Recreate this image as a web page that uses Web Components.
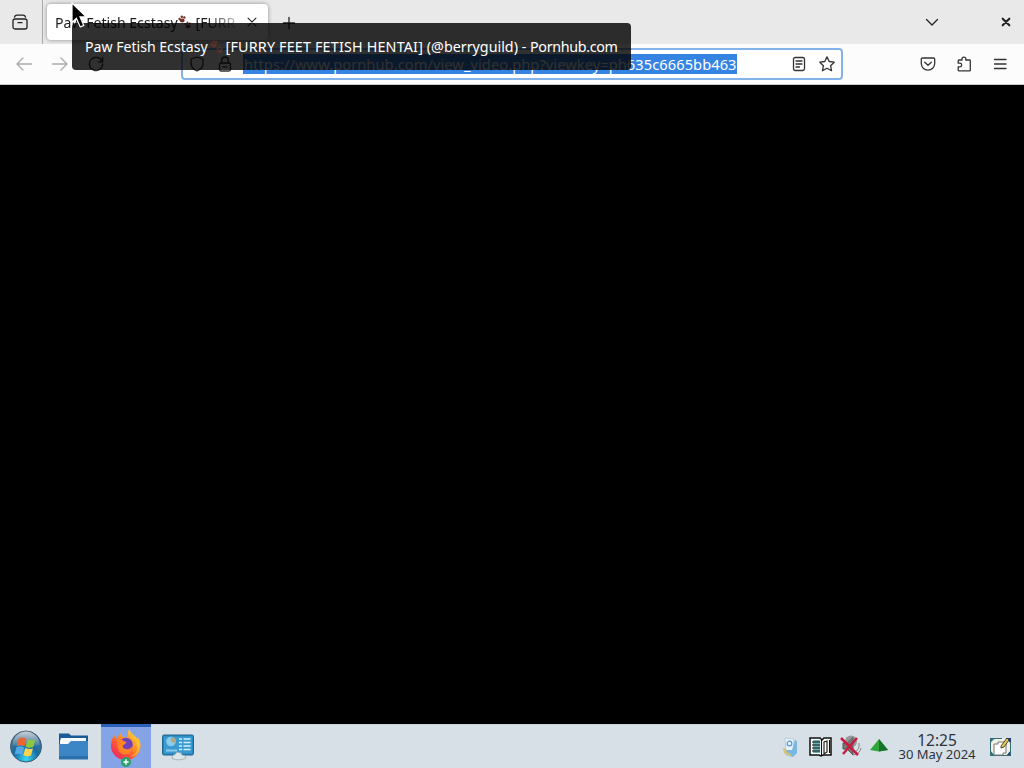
<!DOCTYPE html>
<html lang="en">
<head>
<meta charset="utf-8">
<title>Desktop</title>
<style>
  body {
    margin: 0;
    overflow: hidden;
    font-family: "Noto Sans", sans-serif;
  }
</style>
</head>
<body>
<desk-screen></desk-screen>

<script>
function define(name, html) {
  window.customElements.define(name, class extends HTMLElement {
    constructor() {
      super();
      let shadow = this.attachShadow({mode: 'open'});
      shadow.innerHTML = html;
    }
  });
}

// 16x16 line icons, stroked with the current colour
const glyphs = {
  view: '<rect x="1" y="5" width="14" height="10" rx="2"/><path d="M2.5 3.2Q3 1.2 5 1.2h6q2 0 2.5 2M6 8.7h4"/>',
  back: '<path d="M15.5 8H1.2M7 2 1 8l6 6"/>',
  forward: '<path d="M.5 8h14.3M9 2l6 6-6 6"/>',
  reload: '<path d="M14 5.2A6.6 6.6 0 1 0 14.6 8M14.6 1.5v4.3h-4.3"/>',
  shield: '<path d="M8 1 14 3v4.2c0 3.8-2.5 6.3-6 7.8-3.5-1.5-6-4-6-7.8V3z"/>',
  lock: '<rect x="2.5" y="7" width="11" height="8" rx="1.5"/><path d="M4.7 7V4.3a3.3 3.3 0 0 1 6.6 0V7M6 10.8h4"/>',
  reader: '<rect x="2.5" y="1.5" width="11" height="13" rx="1.8"/><path d="M5 5h6M5 8h6M5 11h3.5"/>',
  star: '<path d="m8 .9 2.2 4.6 5 .7-3.6 3.5.9 5L8 12.3l-4.5 2.4.9-5L.8 6.2l5-.7z"/>',
  pocket: '<path d="M2.5 2h11q1.2 0 1.2 1.2V7.5a6.7 6.7 0 0 1-13.4 0V3.2Q1.3 2 2.5 2zM4.7 6.2 8 9.3l3.3-3.1"/>',
  puzzle: '<path d="M6 4V3a1.9 1.9 0 0 1 3.8 0v1h3.7q.8 0 .8.8V14q0 .9-.9.9H3.1q-.9 0-.9-.9v-3.2h1.7a1.8 1.8 0 0 0 0-3.6H2.2V4.9q0-.9.9-.9z"/>',
  menu: '<path d="M2.5 3.5h11.5M2.5 8h11.5M2.5 12.5h11.5"/>',
  down: '<path d="m2.5 5.5 5.5 5.5 5.5-5.5"/>',
  close: '<path d="m3.5 3.5 9 9M12.5 3.5l-9 9"/>',
  bold: '<path stroke-width="2.4" d="m4.2 4.2 7.6 7.6M11.8 4.2l-7.6 7.6"/>',
  plus: '<path d="M8 2.5v11M2.5 8h11"/>'
};

window.customElements.define('ui-icon', class extends HTMLElement {
  constructor() {
    super();
    let shadow = this.attachShadow({mode: 'open'});
    shadow.innerHTML = `
      <style>
        :host { display: block; width: 16px; height: 16px; flex: none; }
        svg { display: block; width: 100%; height: 100%; fill: none;
          stroke: currentColor; stroke-width: 1.3; stroke-linejoin: round; stroke-linecap: round; }
      </style>
      <svg viewBox="0 0 16 16">${glyphs[this.getAttribute('name')]}</svg>
    `;
  }
});

define('tab-strip', `
  <style>
    :host { display: flex; height: 44px; box-sizing: border-box; background: #e9e9e9; color: #222; align-items: center; }
    .view { width: 43px; height: 44px; display: flex; align-items: center; padding-left: 12px;
      box-sizing: border-box; border-right: 1px solid #aaa; }
    .tab { display: flex; align-items: center; width: 221px; height: 36px; margin-left: 4px; box-sizing: border-box;
      padding: 0 8px; background: #fff; border-radius: 4px; box-shadow: 0 0 4px rgba(0, 0, 0, .4); }
    .title { width: 184px; font-size: 14.1px; white-space: nowrap; overflow: hidden; display: flex; align-items: center;
      -webkit-mask-image: linear-gradient(90deg, #000 150px, transparent 192px);
      mask-image: linear-gradient(90deg, #000 150px, transparent 192px); }
    .close { width: 14px; height: 14px; margin-left: 6px; }
    .plus { margin-left: 13px; position: relative; top: 1px; }
    .down { margin-left: auto; }
    .quit { width: 14px; height: 14px; margin: 0 11px 0 59px; }
    paw-print { margin-right: 5px; }
  </style>
  <div class="view"><ui-icon name="view"></ui-icon></div>
  <div class="tab">
    <div class="title"><span>Paw Fetish Ecstasy</span><paw-print></paw-print><span>[FURR</span></div>
    <ui-icon class="close" name="close"></ui-icon>
  </div>
  <ui-icon class="plus" name="plus"></ui-icon>
  <ui-icon class="down" name="down"></ui-icon>
  <ui-icon class="quit" name="bold"></ui-icon>
`);

define('paw-print', `
  <style>
    :host { display: block; width: 13px; height: 14px; flex: none; }
    svg { display: block; fill: #713126; }
  </style>
  <svg width="13" height="14" viewBox="0 0 13 14">
    <circle cx="1.6" cy="4" r="1.2"/><circle cx="3.8" cy="1.7" r="1.2"/><circle cx="6.3" cy="2.5" r="1.2"/>
    <ellipse cx="4.2" cy="5.5" rx="2.4" ry="1.9"/>
    <circle cx="7.5" cy="9" r="1"/><circle cx="9.5" cy="7.5" r="1"/><circle cx="11.8" cy="8.5" r="1"/>
    <ellipse cx="10" cy="11.4" rx="2.3" ry="1.9"/>
  </svg>
`);

define('nav-bar', `
  <style>
    :host { display: flex; height: 41px; box-sizing: border-box; align-items: center; padding-left: 16px;
      background: #fcfcfc; border-bottom: 1px solid #ccc; color: #333; }
    .nav { display: flex; gap: 20px; width: 165px; }
    .off { color: #aaa; }
    .url { display: flex; align-items: center; width: 662px; height: 32px; box-sizing: border-box; padding: 0 6px;
      background: #fff; border: 2px solid #84b3e9; border-radius: 4px; }
    .lock { margin: 0 10px 0 12px; }
    .address { font-size: 14.67px; letter-spacing: .06px; line-height: 20px; height: 20px; padding-left: 1px;
      white-space: nowrap; color: #fff; background: #3584e4; }
    .reader { margin: 0 12px 0 auto; }
    .tools { display: flex; gap: 20px; margin: 0 16px 0 auto; }
  </style>
  <div class="nav">
    <ui-icon class="off" name="back"></ui-icon>
    <ui-icon class="off" name="forward"></ui-icon>
    <ui-icon name="reload"></ui-icon>
  </div>
  <div class="url">
    <ui-icon name="shield"></ui-icon>
    <ui-icon class="lock" name="lock"></ui-icon>
    <div class="address">https://www.pornhub.com/view_video.php?viewkey=ph635c6665bb463</div>
    <ui-icon class="reader" name="reader"></ui-icon>
    <ui-icon name="star"></ui-icon>
  </div>
  <div class="tools">
    <ui-icon name="pocket"></ui-icon>
    <ui-icon name="puzzle"></ui-icon>
    <ui-icon name="menu"></ui-icon>
  </div>
`);

define('tab-tooltip', `
  <style>
    :host { position: absolute; left: 72px; top: 23px; width: 559px; height: 47px; box-sizing: border-box;
      padding: 0 13px; display: flex; align-items: center; border-radius: 4px; background: rgba(0, 0, 0, .81);
      color: #fff; font-size: 14.1px; white-space: nowrap; }
    paw-print { margin: 0 3px 0 2px; opacity: .7; }
    .rest { font-size: 14.3px; }
    .caps { letter-spacing: .19px; }
    .site { letter-spacing: -.33px; }
  </style>
  <span>Paw Fetish Ecstasy</span><paw-print></paw-print><span class="rest"><span class="caps">[FURRY FEET FETISH HENTAI]</span> (@berryguild) - <span class="site">Pornhub.com</span></span>
`);

define('mouse-pointer', `
  <style>
    :host { position: absolute; left: 71px; top: 2px; }
    svg { display: block; }
  </style>
  <svg width="18" height="28" viewBox="0 0 18 28">
    <path d="M1 1v19.5l4.400-4.200 3.8 8.700 3.6-1.600-3.8-8.500h6.2z" fill="#000" stroke="#fff" stroke-width="1.2"/>
  </svg>
`);

define('start-orb', `
  <svg width="34" height="34" viewBox="0 0 34 34" style="display:block">
    <defs>
      <radialGradient id="g" cx=".5" cy=".9" r=".9"><stop offset="0" stop-color="#35d8f5"/><stop offset=".45" stop-color="#176da5"/><stop offset="1" stop-color="#5d7486"/></radialGradient>
      <linearGradient id="s" x2="0" y2="1"><stop stop-color="#fff" stop-opacity=".65"/><stop offset="1" stop-color="#fff" stop-opacity=".05"/></linearGradient>
    </defs>
    <circle cx="17" cy="16.5" r="15.5" fill="url(#g)" stroke="#395e77"/>
    <path d="M3.5 15a13.5 13.5 0 0 1 27 0q-13 4-27 0z" fill="url(#s)"/>
    <path d="M9.7 8.5q4-2 7.7.2l-1.9 7.5q-3.8-2-7.7-.2z" fill="#ed6531"/>
    <path d="M18.6 9.3q3.8 2 7.7.2l-2 7.5q-3.9 1.8-7.7-.3z" fill="#8dc63f"/>
    <path d="M7.5 17.2q3.8-1.9 7.7.2l-1.9 7.3q-3.8-2-7.7-.2z" fill="#53a9e7"/>
    <path d="M16.3 18q3.8 2 7.7.2l-2 7.4q-3.9 1.8-7.7-.3z" fill="#ffd34d"/>
  </svg>
`);

define('file-folder', `
  <svg width="32" height="30" viewBox="0 0 32 30" style="display:block">
    <path d="M1 1.5h10l2 2h17V14H1z" fill="#195b96"/>
    <path d="M3 6h25v8H2V9z" fill="#f7fafc"/>
    <path d="M1 12h9l3-3h17v18H1z" fill="#3d86c6"/>
    <path d="M1 24h29v3.5H1z" fill="#2c70ad"/>
  </svg>
`);

define('fire-fox', `
  <svg width="34" height="38" viewBox="0 0 34 38" style="display:block">
    <defs>
      <linearGradient id="f" x1="1" x2=".2" y2="1"><stop stop-color="#ffe543"/><stop offset=".45" stop-color="#ff9727"/><stop offset=".75" stop-color="#ff4a3d"/><stop offset="1" stop-color="#e62566"/></linearGradient>
    </defs>
    <path d="M5 6q1 2.500 3 4 1-4 4.500-6-.2 3 2 4.500l4.500-.500q-1-5 1.500-8 1 4 5.500 7 1.500 1 2 3l1-1.500q3 4 2.500 10A15 15 0 0 1 2 19q-.5-7 3-13z" fill="url(#f)"/>
    <circle cx="17" cy="15.5" r="6.8" fill="#7042ba"/>
    <path d="M8 12q4-3 6.500 0l3 1q-1 2.500-3.500 3.300-1 3 2.500 3.700 4 1 6.500-2.500-1 8-8 8Q8.500 25 8 12z" fill="#ff8524"/>
    <path d="M21 8q6 2 7 9 1 8-7 11 10-1 10-12-1-6-5-8z" fill="#ffc936" opacity=".6"/>
    <circle cx="17" cy="33" r="5" fill="#26a269"/>
    <path d="M17 30.3v5.4M14.3 33h5.4" stroke="#fff" stroke-width="1.5"/>
  </svg>
`);

define('control-panel', `
  <svg width="34" height="30" viewBox="0 0 34 30" style="display:block">
    <rect x="1.5" y="3" width="31" height="20" rx="1.5" fill="#2388c3" stroke="#22658d"/>
    <rect x="3" y="4.5" width="28" height="17" fill="#3a9ad2"/>
    <circle cx="10" cy="9.5" r="4.8" fill="#8ccbe9"/><path d="M10 9.5V4.7a4.800 4.800 0 0 1 4.5 6.500z" fill="#b7a77d"/>
    <path d="M5 18.5h11" stroke="#8ccbe9" stroke-width="2"/>
    <path d="M18 7h3M18 10.5h3M18 14h3M18 17.5h3M22.5 7h7M22.5 10.5h7M22.5 14h7M22.5 17.5h7" stroke="#d8effa" stroke-width="1.6"/>
    <path d="M11 26.500q0-4 3-4l2-2.500 4 1 1 2q4 0 4 3-7 3.500-14 .5z" fill="#dfe6e9" stroke="#90a4ad" stroke-width=".7"/>
  </svg>
`);

define('system-tray', `
  <style>
    :host { display: flex; align-items: center; gap: 7px; }
    svg { display: block; }
    .book { position: relative; left: 1px; }
  </style>
  <svg width="22" height="22" viewBox="0 0 22 22">
    <path d="m6 2 9 1-1 14-7-2z" fill="#e8f3fa" stroke="#b3cedb"/>
    <path d="m13 14 3-10 2 1v12l-4 4-7-2-2-5z" fill="#79b8e2"/>
    <path d="m4 12 1 5 5 3 3-1-5-3-2-4z" fill="#d8c27a"/>
    <circle cx="10.5" cy="7.5" r="2.3" fill="none" stroke="#4f9acc" stroke-width="1.2"/>
  </svg>
  <svg class="book" width="24" height="22" viewBox="0 0 24 22">
    <path d="M1 2h10l2 2 2-2h7v17h-8l-2 1-2-1H1z" fill="#fff" stroke="#111" stroke-width="1.5"/>
    <path d="M4 4h7v13H4z" fill="#64b5b5"/>
    <path d="M3 6h8M3 9h8M3 12h8M3 15h8M12.5 4v15M15 6v12l3-2V5l-3 1zM20.5 4v13" fill="none" stroke="#111" stroke-width="1.1"/>
  </svg>
  <svg width="23" height="24" viewBox="0 0 23 24">
    <path d="M4 8h4l6-6v18l-6-6H4z" fill="#777" stroke="#555"/>
    <circle cx="12" cy="6.500" r="6" fill="#777a"/><path d="M16 17q5-3 4-9M14 20q7-1 8-7" fill="none" stroke="#888"/>
    <path d="m2 3 17 17M18 3 4 19" stroke="#c51c3f" stroke-width="2.5"/>
  </svg>
  <svg width="20" height="18" viewBox="0 0 20 18">
    <path d="m10 1 9 11-9 1.500-9-1.500z" fill="#30a63b"/><path d="m10 1 9 11-9 1.500z" fill="#16742b"/>
  </svg>
`);

define('note-pad', `
  <svg width="26" height="24" viewBox="0 0 26 24" style="display:block">
    <path d="M2 3h5L2 8zM2 15l5 6H2z" fill="#227d76"/>
    <path d="M18 3h5v18h-5l5-6V9z" fill="#253f84"/>
    <ellipse cx="12.5" cy="12" rx="10.5" ry="9" fill="#f3f2e8"/>
    <path d="M2.5 21V3.5H14M2.5 20.5h20V7" fill="none" stroke="#356d75"/>
    <path d="M6 9h4V7h8v11h-3v2H6z" fill="#fff" stroke="#777"/>
    <path d="m13 11 6-8 2 2-5 7-3 1z" fill="#e7cb54" stroke="#222" stroke-width=".8"/>
  </svg>
`);

define('task-bar', `
  <style>
    :host { display: flex; height: 44px; box-sizing: border-box; border-top: 1px solid #cbd3da;
      background: #d7dfe7; color: #2c343c; align-items: center; }
    start-orb { margin-left: 9px; width: 34px; }
    file-folder { margin-left: 15px; width: 32px; }
    .active { width: 50px; height: 44px; margin: -1px 0 0 11px; box-sizing: border-box; border-top: 3px solid #2c61bb;
      background: #85a4e5; display: flex; justify-content: center; align-items: center; }
    control-panel { margin-left: 10px; }
    system-tray { margin-left: auto; }
    .clock { width: 88px; margin-left: 4px; text-align: center; white-space: nowrap; }
    .time { font-size: 15.5px; line-height: 16px; }
    .date { font-size: 13px; line-height: 13px; }
    note-pad { margin: 0 10px 0 7px; }
  </style>
  <start-orb></start-orb>
  <file-folder></file-folder>
  <div class="active"><fire-fox></fire-fox></div>
  <control-panel></control-panel>
  <system-tray></system-tray>
  <div class="clock"><div class="time">12:25</div><div class="date">30 May 2024</div></div>
  <note-pad></note-pad>
`);

define('desk-screen', `
  <style>
    :host { display: flex; flex-direction: column; position: relative; width: 1024px; height: 768px; overflow: hidden; }
    main { flex: 1; background: #000; }
  </style>
  <tab-strip></tab-strip>
  <nav-bar></nav-bar>
  <main></main>
  <task-bar></task-bar>
  <tab-tooltip></tab-tooltip>
  <mouse-pointer></mouse-pointer>
`);
</script>
</body>
</html>
